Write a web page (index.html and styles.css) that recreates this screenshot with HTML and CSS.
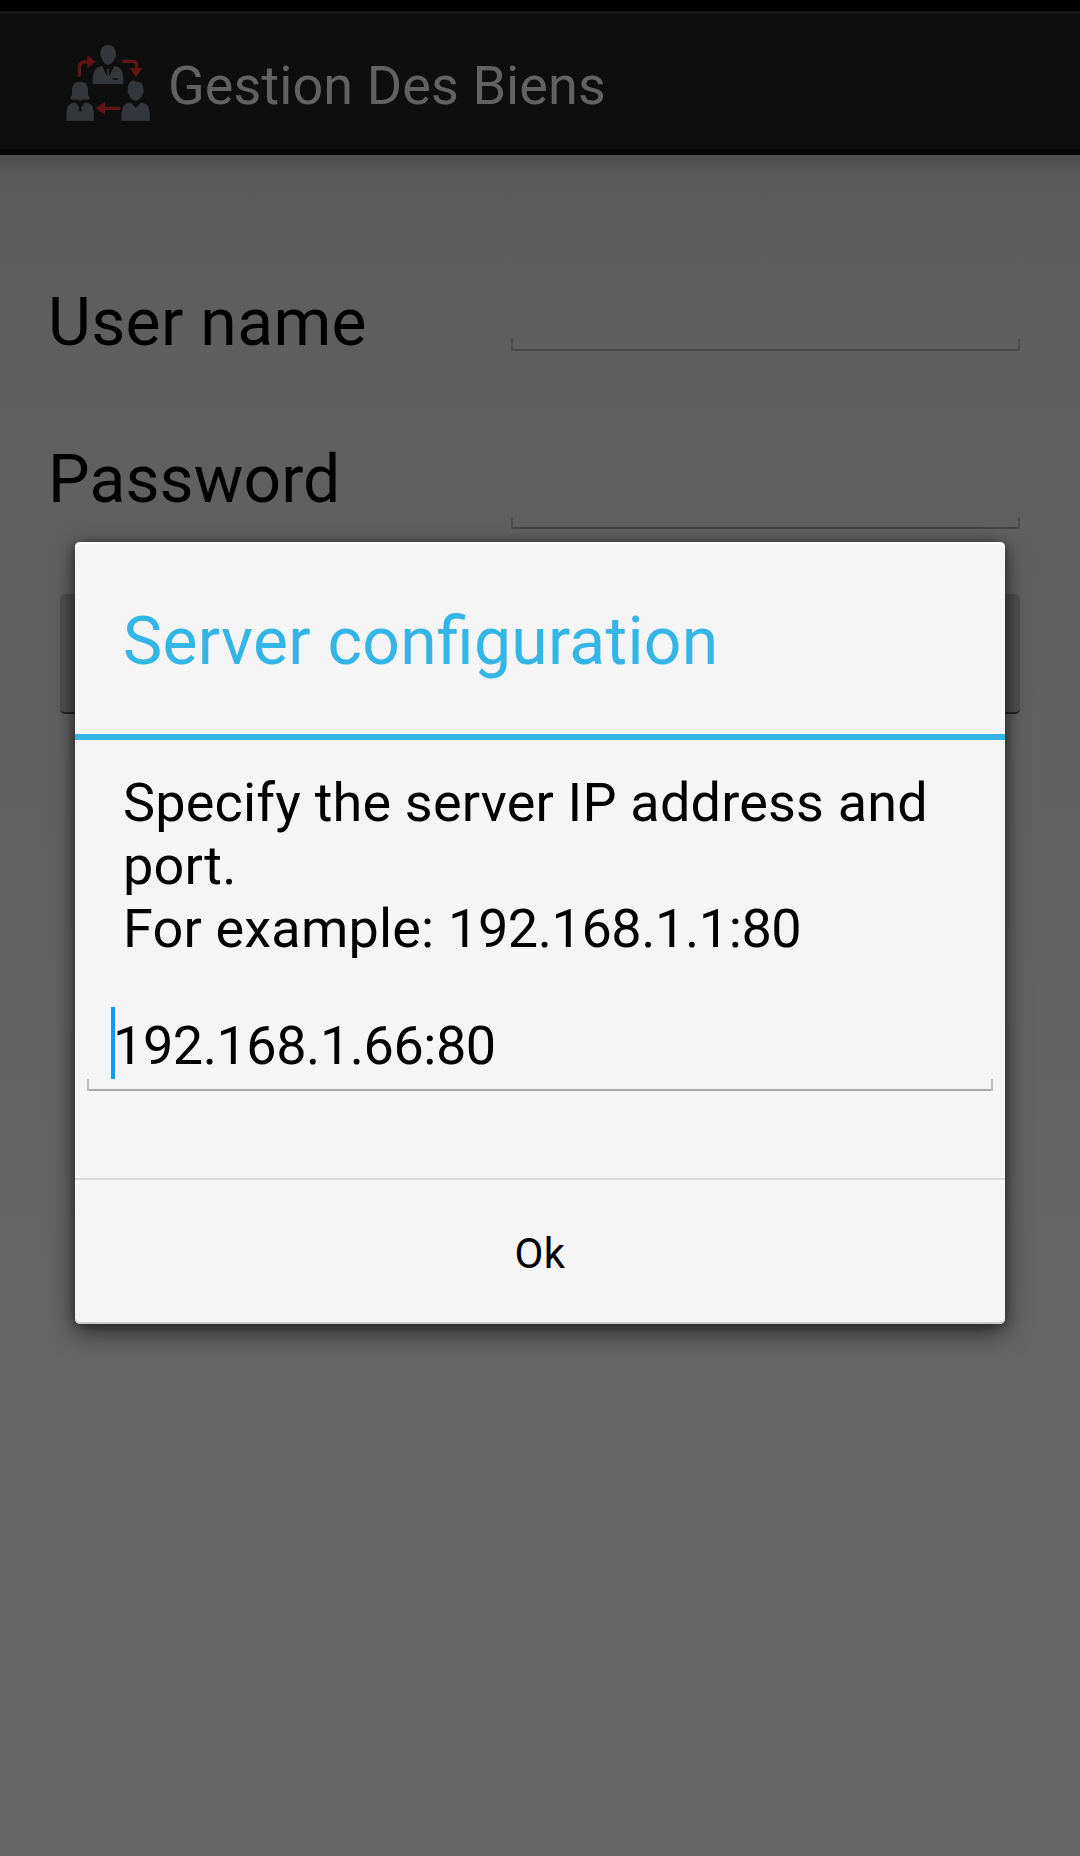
FILE: index.html
```html
<!DOCTYPE html>
<html lang="en">
<head>
<meta charset="utf-8">
<title>Gestion Des Biens</title>
<link rel="stylesheet" href="styles.css">
</head>
<body>
<div class="screen">
  <div class="status-bar"></div>
  <header class="action-bar">
    <svg class="app-icon" viewBox="0 0 360 330" aria-hidden="true">
      <g class="people">
        <path d="M174 44C160 44 151 55 152 70C149 73 151 80 154 83C157 94 166 104 174 104C183 104 192 94 195 83C198 80 200 73 197 70C198 55 188 44 174 44Z"/>
        <path d="M128 162V150C130 128 135 116 143 112L157 108L171 139L173 124L170 117H179L176 124L178 139L192 108L206 112C214 116 219 128 220 150V162Z"/>
        <path d="M90 155C74 155 66 165 66 179C66 192 65 200 61 206C68 211 76 209 82 208L91 214L100 208C107 209 113 211 120 206C115 200 114 192 114 179C114 165 106 155 90 155Z"/>
        <path d="M49 272V265C50 239 52 226 60 222L76 217L88 233L85 240L90 246L96 240L93 233L105 217L121 222C129 226 131 239 132 265V272Z"/>
        <path d="M237 157L244 156L246 150L250 154L254 151L257 156C273 153 281 163 280 181C283 184 280 191 277 193C275 203 265 213 257 213C249 213 239 203 237 193C233 191 231 184 234 181C232 171 233 164 240 159Z"/>
        <path d="M214 272V265C215 238 219 226 226 222L241 217L257 233L273 217L288 222C296 226 299 239 300 265V272Z"/>
      </g>
      <path class="pocket" d="M188 144H204V150H188Z"/>
      <g class="arrows">
        <path class="stem" d="M88 136V112Q88 96 104 96H115M220 94H248Q260 94 260 106V116M207 235H164"/>
        <path d="M112 76L138 95L112 114ZM240 114H277L258 141ZM165 216L137 235L165 254Z"/>
      </g>
    </svg>
    <h1 class="app-title">Gestion Des Biens</h1>
  </header>
  <main class="login">
    <div class="row row-user">
      <label class="label">User name</label>
      <div class="field"></div>
    </div>
    <div class="row row-password">
      <label class="label">Password</label>
      <div class="field"></div>
    </div>
    <div class="login-button"></div>
  </main>
  <section class="dialog">
    <h2 class="dialog-title">Server configuration</h2>
    <p class="message">Specify the server IP address and<br>port.<br>For example: <span class="sample">192.168.1.1:80</span></p>
    <div class="field address"><span class="caret"></span><span class="value">192.168.1.66:80</span></div>
    <div class="ok">Ok</div>
  </section>
</div>
</body>
</html>
```
FILE: styles.css
```css
* { box-sizing: border-box; }
body { margin: 0; background: #666; font-family: Roboto, sans-serif; color: #000; }
h1, h2, p { margin: 0; font-weight: 400; }

.screen { position: relative; width: 1080px; height: 1856px; overflow: hidden; display: flex; flex-direction: column; }
.status-bar { height: 11px; background: #000; }
.action-bar {
  height: 144px;
  display: flex;
  align-items: center;
  padding: 7px 0 0 50px;
  background: #0e0e0e;
  border-top: 3px solid #191919;
  border-bottom: 6px solid #080808;
}
.app-icon { width: 120px; height: 110px; }
.people { fill: #33363b; }
.pocket { fill: #17181a; }
.arrows { fill: #611414; }
.stem { fill: none; stroke: #611414; stroke-width: 10; stroke-linecap: round; }
.app-title { padding-top: 1px; font-size: 54px; line-height: 64px; letter-spacing: .08px; color: #626262; margin-left: -2px; }

.login {
  flex: 1;
  padding: 0 60px 0 48px;
  background:
    linear-gradient(rgba(0, 0, 0, .14), rgba(0, 0, 0, 0) 26px),
    linear-gradient(#5c5c5c, #5f5f5f 220px, #666 1300px);
}
.row { display: flex; justify-content: space-between; }
.row-user { height: 196px; padding-top: 127px; }
.row-password { height: 178px; padding-top: 89px; }
.label { font-size: 66px; line-height: 78px; }
.row-user .label { padding-top: 2px; letter-spacing: .35px; }
.row-password .label { padding-top: 1px; letter-spacing: .1px; }

.field {
  --line: #474747;
  --tick: #4d4d4d;
  background:
    linear-gradient(var(--line), var(--line)) 2px 100% / calc(100% - 4px) 2px no-repeat,
    linear-gradient(var(--tick), var(--tick)) 0 100% / 2px 12px no-repeat,
    linear-gradient(var(--tick), var(--tick)) 100% 100% / 2px 12px no-repeat;
}
.row .field { width: 509px; height: 69px; }
.row-password .field { height: 89px; }
.login-button {
  height: 120px;
  margin: 65px 0 0 12px;
  border-radius: 5px;
  border-bottom: 2px solid #262626;
  background: #505050;
}

/* The modal floats over the login form */
.dialog {
  position: absolute;
  left: 75px;
  top: 542px;
  width: 930px;
  height: 782px;
  display: flex;
  flex-direction: column;
  border-radius: 5px;
  background: #f5f5f5;
  box-shadow: 0 8px 24px rgba(0, 0, 0, .6), 0 1px 8px rgba(0, 0, 0, .35), inset 0 2px #fff, inset 0 -2px #cbcbcb;
}
.dialog-title {
  height: 198px;
  padding: 61px 0 0 48px;
  border-bottom: 6px solid #33b5e5;
  color: #33b5e5;
  font-size: 66px;
  line-height: 78px;
  letter-spacing: .3px;
  font-feature-settings: "liga" 1;
}
.message {
  height: 220px;
  padding: 31px 0 0 48px;
  font-size: 54px;
  line-height: 63px;
  letter-spacing: .19px;
  white-space: nowrap;
}
.sample { letter-spacing: -.43px; }
.address {
  --line: #a8a8a8;
  --tick: #bdbdbd;
  display: flex;
  height: 131px;
  margin: 0 12px;
  padding: 47px 0 0 24px;
}
.caret { width: 4px; height: 72px; background: #1499f2; }
.value { margin-left: -2px; font-size: 54px; line-height: 77px; letter-spacing: -.46px; }
.ok {
  height: 146px;
  margin-top: 87px;
  padding-top: 2px;
  border-top: 2px solid #d9d9d9;
  font-size: 42px;
  line-height: 143px;
  letter-spacing: .4px;
  text-align: center;
}
```
